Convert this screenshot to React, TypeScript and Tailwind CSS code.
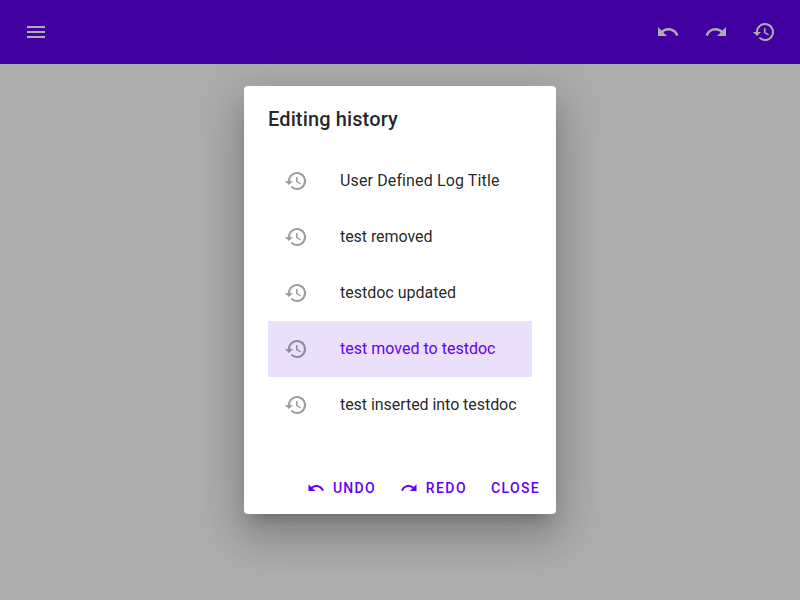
import { MdMenu, MdRedo, MdUndo } from "react-icons/md";

const entries = [
  { title: "User Defined Log Title", spacing: "tracking-[0.13px]" },
  { title: "test removed", spacing: "tracking-[-0.06px]" },
  { title: "testdoc updated", spacing: "tracking-[0px]" },
  { title: "test moved to testdoc", spacing: "tracking-[0.01px]" },
  { title: "test inserted into testdoc", spacing: "tracking-[-0.05px]" },
];

function HistoryIcon({ className = "" }: { className?: string }) {
  return (
    <svg viewBox="0 0 24 24" className={"size-6 shrink-0 " + className} fill="currentColor">
      <path
        d="M5 12.2A8 8 0 1 1 7.34 17.66"
        fill="none"
        stroke="currentColor"
        strokeWidth="2"
      />
      <path d="M.9 12h8.1L5 16z" />
      <path d="M12 8v5l4.28 2.54.72-1.21-3.5-2.08V8z" />
    </svg>
  );
}

export default function App() {
  return (
    <div className="relative h-[600px] w-[800px] overflow-hidden bg-white font-[Roboto,sans-serif]">
      <header className="flex h-16 items-center bg-[#6200ee] px-6 text-white">
        <MdMenu size={24} />
        <div className="ml-auto flex gap-6">
          <MdUndo size={24} />
          <MdRedo size={24} />
          <HistoryIcon />
        </div>
      </header>
      <div className="absolute inset-0 flex items-center justify-center bg-black/32">
        <div className="flex h-[428px] w-[312px] flex-col rounded bg-white shadow-[0_11px_15px_-7px_rgba(0,0,0,0.2),0_24px_38px_3px_rgba(0,0,0,0.14),0_9px_46px_8px_rgba(0,0,0,0.12)]">
          <h2 className="px-6 pt-[17px] text-xl leading-8 font-medium tracking-[0.13px] text-black/87">
            Editing history
          </h2>
          <ul className="mt-[18px] px-6">
            {entries.map((entry, i) => (
              <li
                key={entry.title}
                className={
                  "flex h-14 items-center px-4 text-base whitespace-nowrap " +
                  entry.spacing +
                  (i === 3 ? " bg-[#eae0fb] text-[#6200ee]" : " text-black/87")
                }
              >
                <HistoryIcon className="mr-8 text-black opacity-38" />
                {entry.title}
              </li>
            ))}
          </ul>
          <div className="mt-auto flex h-[52px] items-center justify-end gap-2 p-2 text-sm font-medium tracking-[1.25px] text-[#6200ee]">
            <button className="flex h-9 items-center gap-2 px-2">
              <MdUndo size={18} />
              UNDO
            </button>
            <button className="flex h-9 items-center gap-2 px-2 tracking-[1.4px]">
              <MdRedo size={18} />
              REDO
            </button>
            <button className="h-9 px-2 tracking-[1.35px]">CLOSE</button>
          </div>
        </div>
      </div>
    </div>
  );
}
